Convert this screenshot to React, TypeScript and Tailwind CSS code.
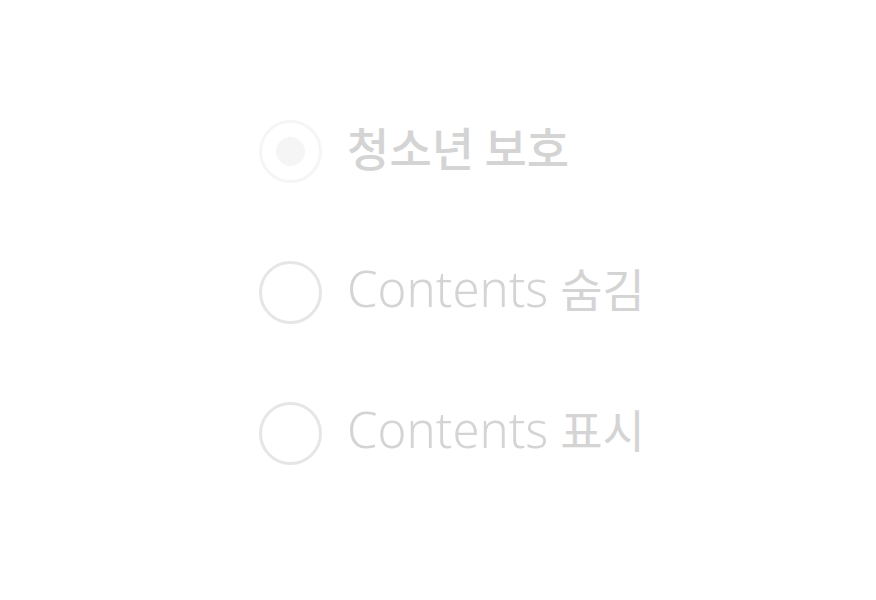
import { useState } from "react";

const options = [
  { value: "protect", latin: "", korean: "청소년 보호" },
  { value: "hide", latin: "Contents", korean: "숨김" },
  { value: "show", latin: "Contents", korean: "표시" },
];

export default function App() {
  const [selected, setSelected] = useState("protect");

  return (
    <main className="flex min-h-screen items-center justify-center bg-white font-['Noto_Sans','Noto_Sans_CJK_KR',sans-serif]">
      <fieldset className="flex flex-col gap-[78px] pb-4 pl-7">
        {options.map(({ value, latin, korean }) => (
          <label
            key={value}
            className="group flex cursor-pointer items-center gap-[25px] text-[#d4d4d4]"
          >
            <input
              type="radio"
              name="visibility"
              value={value}
              checked={selected === value}
              onChange={() => setSelected(value)}
              className="size-[63px] shrink-0 appearance-none rounded-full border-3 border-[#e6e6e6] checked:border-[#f5f5f5] checked:bg-[#f5f5f5] checked:bg-clip-content checked:p-[14px]"
            />
            <span className="flex items-baseline gap-3 pb-2.5 leading-[52px] whitespace-nowrap">
              {latin && (
                <span className="text-[49px] font-light">{latin}</span>
              )}
              <span className="font-['Noto_Sans_CJK_KR',sans-serif] text-[46px] font-normal group-has-checked:font-medium">
                {korean}
              </span>
            </span>
          </label>
        ))}
      </fieldset>
    </main>
  );
}
